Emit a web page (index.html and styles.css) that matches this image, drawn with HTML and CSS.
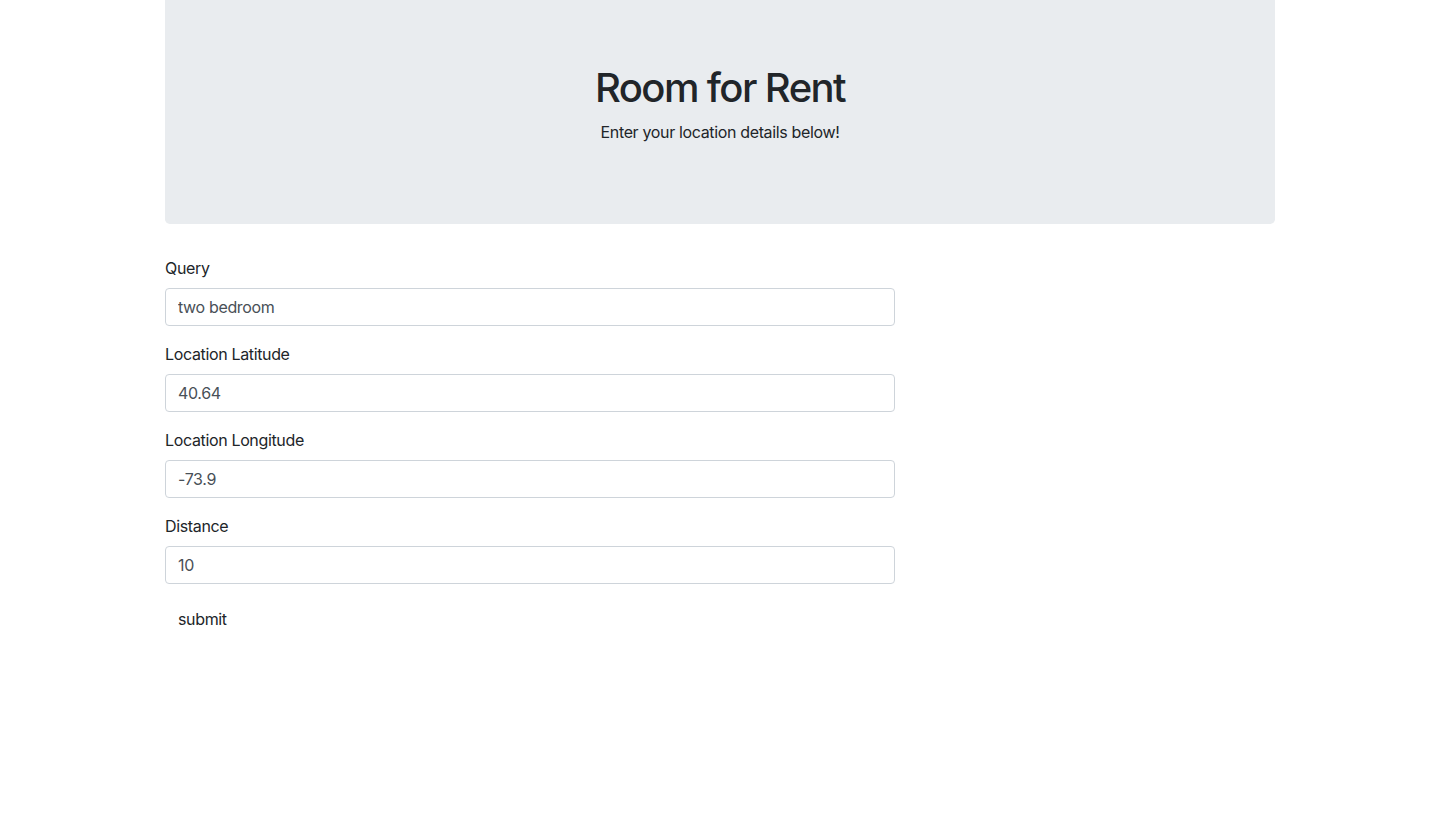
FILE: index.html
```html
<!DOCTYPE html>
<html lang="en">
<head>
<meta charset="utf-8">
<title>Room for Rent</title>
<link rel="stylesheet" href="styles.css">
</head>
<body>
<div class="container">
  <div class="jumbotron">
    <h1 class="title">Room for Rent</h1>
    <p class="lead">Enter your location details below!</p>
  </div>
  <div class="row">
    <form class="col-8">
      <div class="form-group">
        <label class="label" for="q">Query</label>
        <input class="form-control" id="q" type="text" value="two bedroom">
      </div>
      <div class="form-group">
        <label class="label" for="lat">Location Latitude</label>
        <input class="form-control" id="lat" type="text" value="40.64">
      </div>
      <div class="form-group">
        <label class="label" for="lng">Location Longitude</label>
        <input class="form-control" id="lng" type="text" value="-73.9">
      </div>
      <div class="form-group">
        <label class="label" for="dist">Distance</label>
        <input class="form-control" id="dist" type="text" value="10">
      </div>
      <button class="btn" type="submit">submit</button>
    </form>
  </div>
</div>
</body>
</html>
```
FILE: styles.css
```css
* { box-sizing: border-box; }
body {
  margin: 0;
  font-family: Inter, "Liberation Sans", sans-serif;
  font-size: 16px;
  line-height: 1.5;
  letter-spacing: -0.35px;
  color: #212529;
  background: #fff;
}
.container {
  width: 1140px;
  margin: 0 auto;
  padding: 0 15px;
}
.jumbotron {
  background: #e9ecef;
  padding: 64px 32px;
  margin-bottom: 32px;
  border-radius: 0 0 4.8px 4.8px;
  text-align: center;
}
.title {
  margin: 0 0 8px;
  font-size: 40px;
  font-weight: 500;
  line-height: 1.2;
  letter-spacing: -1.6px;
}
.lead {
  margin: 0 0 16px;
  font-size: 16px;
}
.row {
  display: flex;
  margin: 0 -15px;
}
.col-8 {
  width: 760px;
  padding: 0 15px;
}
.form-group {
  margin-bottom: 16px;
}
.label {
  display: block;
  margin-bottom: 8px;
}
.form-control {
  display: block;
  width: 100%;
  height: 38px;
  padding: 6px 12px;
  font-family: inherit;
  font-size: 16px;
  line-height: 1.5;
  letter-spacing: inherit;
  color: #495057;
  background: #fff;
  border: 1px solid #ced4da;
  border-radius: 4px;
  outline: none;
}
.btn {
  display: inline-block;
  height: 38px;
  padding: 6px 12px;
  font-family: inherit;
  font-size: 16px;
  line-height: 1.5;
  letter-spacing: inherit;
  color: #212529;
  background: transparent;
  border: 1px solid transparent;
  border-radius: 4px;
  cursor: pointer;
}
```
